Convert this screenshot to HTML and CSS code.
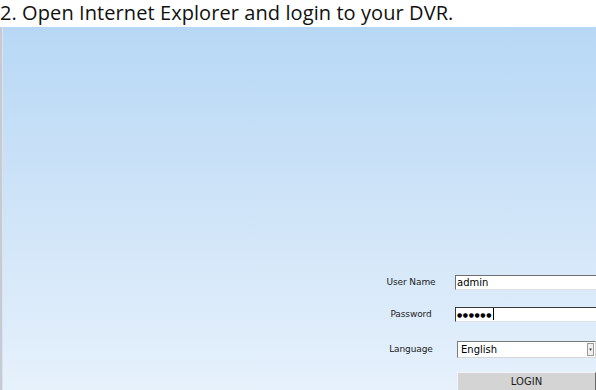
FILE: index.html
```html
<!DOCTYPE html>
<html>
<head>
<meta charset="utf-8">
<link rel="stylesheet" href="styles.css">
</head>
<body>
<p class="step">2. Open Internet Explorer and login to your DVR.</p>
<div class="shot">
  <form class="login">
    <div class="row">
      <span class="label">User Name</span>
      <span class="field">admin</span>
    </div>
    <div class="row">
      <span class="label">Password</span>
      <span class="field pw">&#9679;&#9679;&#9679;&#9679;&#9679;&#9679;<span class="caret"></span></span>
    </div>
    <div class="row row-lang">
      <span class="label">Language</span>
      <span class="select">English<span class="arrow">&#9662;</span></span>
    </div>
    <div class="row">
      <span class="label"></span>
      <span class="button">LOGIN</span>
    </div>
  </form>
</div>
</body>
</html>
```

FILE: styles.css
```css
html, body {
  margin: 0;
  padding: 0;
  width: 596px;
  height: 390px;
  overflow: hidden;
  background: #ffffff;
}

.step {
  margin: 0;
  height: 27px;
  font-family: "Open Sans", "Noto Sans", sans-serif;
  font-size: 20px;
  line-height: 26px;
  letter-spacing: 0.08px;
  color: #111111;
  white-space: nowrap;
}

.shot {
  height: 363px;
  border-left: 2px solid #c6cad2;
  box-shadow: inset 1px 0 0 #d8e4f0;
  background: linear-gradient(to bottom, #b7d8f5 0%, #cfe4f8 50%, #e6f1fc 100%);
  overflow: hidden;
  box-sizing: border-box;
  padding-top: 239px;
  padding-left: 378px;
}

.login {
  display: flex;
  flex-direction: column;
  width: 300px;
  margin: 0;
}

.row {
  display: flex;
  align-items: center;
  height: 32px;
}

.row-lang {
  padding-top: 3px;
}

.label {
  width: 62px;
  margin-right: 13px;
  text-align: center;
  font-family: "DejaVu Sans", Verdana, sans-serif;
  font-size: 9px;
  color: #222222;
  letter-spacing: -0.1px;
}

.field {
  display: flex;
  align-items: center;
  width: 160px;
  height: 15px;
  box-sizing: border-box;
  background: #ffffff;
  border-top: 1px solid #6e6e6e;
  border-left: 1px solid #6e6e6e;
  border-bottom: 1px solid #e2e2e2;
  padding-left: 1px;
  font-family: "DejaVu Sans", Verdana, sans-serif;
  font-size: 10px;
  color: #000000;
}

.pw {
  font-size: 6px;
  letter-spacing: 0.6px;
  border-top: 1px solid #3a3a3a;
  border-left: 1px solid #3a3a3a;
}

.caret {
  display: inline-block;
  width: 1px;
  height: 12px;
  background: #000000;
  margin-left: 1px;
}

.select {
  position: relative;
  display: flex;
  align-items: center;
  margin-left: 2px;
  width: 139px;
  height: 17px;
  box-sizing: border-box;
  background: #ffffff;
  border: 1px solid #7a7a7a;
  border-bottom-color: #d6d6d6;
  border-right-color: #d6d6d6;
  padding-left: 3px;
  font-family: "DejaVu Sans", Verdana, sans-serif;
  font-size: 10px;
  color: #000000;
}

.arrow {
  position: absolute;
  right: 1px;
  top: 1px;
  width: 7px;
  height: 13px;
  box-sizing: border-box;
  border: 1px solid #9a9a9a;
  background: #f0f0f0;
  font-size: 5px;
  line-height: 11px;
  text-align: center;
  color: #333333;
}

.button {
  display: flex;
  align-items: center;
  justify-content: center;
  margin-left: 2px;
  margin-top: 1px;
  width: 139px;
  height: 20px;
  box-sizing: border-box;
  background: #d4d4d4;
  border-top: 1px solid #f4f4f4;
  border-left: 1px solid #f4f4f4;
  border-right: 1px solid #6a6a6a;
  border-bottom: 1px solid #6a6a6a;
  font-family: "DejaVu Sans", Verdana, sans-serif;
  font-size: 10px;
  color: #1a1a1a;
}
```
